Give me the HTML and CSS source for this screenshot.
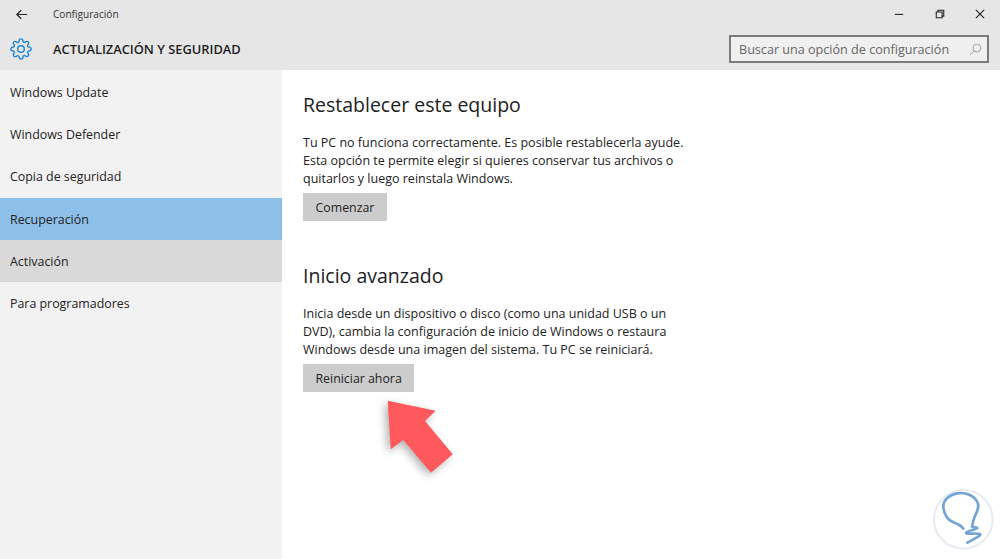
FILE: index.html
```html
<!DOCTYPE html>
<html lang="es">
<head>
<meta charset="utf-8">
<title>Configuración</title>
<link rel="stylesheet" href="styles.css">
</head>
<body>
<div class="window">
  <header class="header">
    <div class="titlebar">
      <svg class="back" viewBox="0 0 14 12"><path d="M13 6H1.2M6 1 1 6l5 5"/></svg>
      <span class="apptitle">Configuración</span>
      <div class="controls">
        <svg class="ctl" viewBox="0 0 12 12"><path d="M1 6.5h10"/></svg>
        <svg class="ctl" viewBox="0 0 12 12"><path d="M1.500 3.500h7v7h-7zM3.500 3.500v-2h7v7h-2"/></svg>
        <svg class="ctl" viewBox="0 0 12 12"><path d="m1 1 10 10M11 1 1 11"/></svg>
      </div>
    </div>
    <div class="headrow">
      <svg class="gear" viewBox="0 0 24 24"><circle cx="12" cy="12" r="3.600"/><path d="M19.400 15a1.650 1.650 0 0 0 .33 1.820l.06.06a2 2 0 0 1 0 2.830 2 2 0 0 1-2.830 0l-.06-.06a1.650 1.650 0 0 0-1.820-.33 1.650 1.650 0 0 0-1 1.510V21a2 2 0 0 1-2 2 2 2 0 0 1-2-2v-.09A1.650 1.650 0 0 0 9 19.400a1.650 1.650 0 0 0-1.820.33l-.06.06a2 2 0 0 1-2.830 0 2 2 0 0 1 0-2.830l.06-.06a1.650 1.650 0 0 0 .33-1.820 1.650 1.650 0 0 0-1.510-1H3a2 2 0 0 1-2-2 2 2 0 0 1 2-2h.09A1.650 1.650 0 0 0 4.600 9a1.650 1.650 0 0 0-.33-1.820l-.06-.06a2 2 0 0 1 0-2.830 2 2 0 0 1 2.830 0l.06.06a1.650 1.650 0 0 0 1.820.33H9a1.650 1.650 0 0 0 1-1.510V3a2 2 0 0 1 2-2 2 2 0 0 1 2 2v.09a1.650 1.650 0 0 0 1 1.510 1.650 1.650 0 0 0 1.820-.33l.06-.06a2 2 0 0 1 2.830 0 2 2 0 0 1 0 2.830l-.06.06a1.650 1.650 0 0 0-.33 1.820V9a1.650 1.650 0 0 0 1.510 1H21a2 2 0 0 1 2 2 2 2 0 0 1-2 2h-.09a1.650 1.650 0 0 0-1.510 1z"/></svg>
      <h1 class="section">ACTUALIZACIÓN Y SEGURIDAD</h1>
      <div class="search">
        <span class="search-text">Buscar una opción de configuración</span>
        <svg class="search-icon" viewBox="0 0 14 14"><circle cx="8.500" cy="5.500" r="4.200"/><path d="M5.500 8.500 1 13"/></svg>
      </div>
    </div>
  </header>
  <div class="body">
    <nav class="sidebar">
      <div class="item">Windows Update</div>
      <div class="item">Windows Defender</div>
      <div class="item">Copia de seguridad</div>
      <div class="item selected">Recuperación</div>
      <div class="item hover">Activación</div>
      <div class="item">Para programadores</div>
    </nav>
    <main class="content">
      <section class="block">
        <h2 class="heading">Restablecer este equipo</h2>
        <p class="text">Tu PC no funciona correctamente. Es posible restablecerla ayude.<br>Esta opción te permite elegir si quieres conservar tus archivos o<br>quitarlos y luego reinstala Windows.</p>
        <button class="btn">Comenzar</button>
      </section>
      <section class="block">
        <h2 class="heading">Inicio avanzado</h2>
        <p class="text">Inicia desde un dispositivo o disco (como una unidad USB o un<br>DVD), cambia la configuración de inicio de Windows o restaura<br>Windows desde una imagen del sistema. Tu PC se reiniciará.</p>
        <button class="btn">Reiniciar ahora</button>
      </section>
    </main>
  </div>
  <svg class="arrow" viewBox="0 0 90 90"><polygon points="7.700,10.700 55.700,20.700 45,31 72.700,64.300 51,82.700 23.300,50 10.700,59.300"/></svg>
  <svg class="logo" viewBox="0 0 270 267"><circle class="logo-disc" cx="160" cy="148" r="88"/><path class="logo-s" d="M160 176c-6-10-18-14-30-19-16-7-28-24-30-46-1-20 16-36 42-41 26-4 50 6 60 26 8 16-2 30-8 44-4 11-6 20-8 30 6 3 14 1 16 4-8 6-30 8-34 14-2 6 30 0 42 4 6 4-20 16-38 26"/></svg>
</div>
</body>
</html>
```
FILE: styles.css
```css
* { box-sizing: border-box; }
html, body { margin: 0; padding: 0; }
body { font-family: "Open Sans", "Noto Sans", sans-serif; color: #222; background: #fff; overflow: hidden; }
.window { position: relative; width: 1000px; height: 559px; display: flex; flex-direction: column; overflow: hidden; }

.header { height: 70px; background: #e6e6e6; flex: none; }
.titlebar { height: 28px; display: flex; align-items: center; padding-left: 16px; }
.back { width: 12px; height: 11px; fill: none; stroke: #222; stroke-width: 1.400; }
.apptitle { margin-left: 25px; font-size: 10.100px; color: #333; }
.controls { margin-left: auto; display: flex; gap: 30.500px; padding-right: 15px; }
.ctl { width: 10px; height: 10px; fill: none; stroke: #222; stroke-width: 1.300; }

.headrow { height: 42px; display: flex; align-items: center; padding: 0 11px 0 10px; }
.gear { width: 22px; height: 22px; fill: none; stroke: #1a84dc; stroke-width: 1.500; flex: none; }
.section { margin: 0 0 0 21px; font-size: 12.850px; font-weight: 600; color: #1e1e1e; }
.search { margin-left: auto; width: 260px; height: 28px; border: 2px solid #7b7b7b; background: #f0f0f0; display: flex; align-items: center; justify-content: space-between; padding: 0 5px 0 8px; }
.search-text { font-size: 12.600px; color: #666; }
.search-icon { width: 13px; height: 13px; fill: none; stroke: #999; stroke-width: 1; }

.body { flex: 1; display: flex; min-height: 0; }
.sidebar { width: 282px; background: #f2f2f2; padding-top: 1.400px; flex: none; }
.item { height: 42.200px; display: flex; align-items: center; padding-left: 10px; font-size: 12.400px; color: #222; }
.item.selected { background: #8dc0e9; }
.item.hover { background: #d9d9d9; }

.content { flex: 1; padding: 19px 0 0 21px; }
.block { margin-bottom: 39px; }
.heading { margin: 0 0 13px; font-size: 19.500px; font-weight: 400; line-height: 32px; color: #222; }
.text { margin: 0 0 5px; font-size: 12.500px; line-height: 18px; color: #222; }
.btn { display: block; height: 28px; padding: 0 12.500px; border: 0; background: #cccccc; font: inherit; font-size: 12.350px; color: #222; }

.arrow { position: absolute; left: 380px; top: 390px; width: 90px; height: 90px; overflow: visible; fill: #ff585d; filter: drop-shadow(-3px 3px 4px rgba(0,0,0,.3)); }
.logo { position: absolute; left: 910px; top: 470px; width: 90px; height: 89px; }
.logo-disc { fill: #fff; stroke: #e6ebf4; stroke-width: 6; }
.logo-s { fill: none; stroke: #74a3d6; stroke-width: 8; stroke-linecap: round; stroke-linejoin: round; }
```
